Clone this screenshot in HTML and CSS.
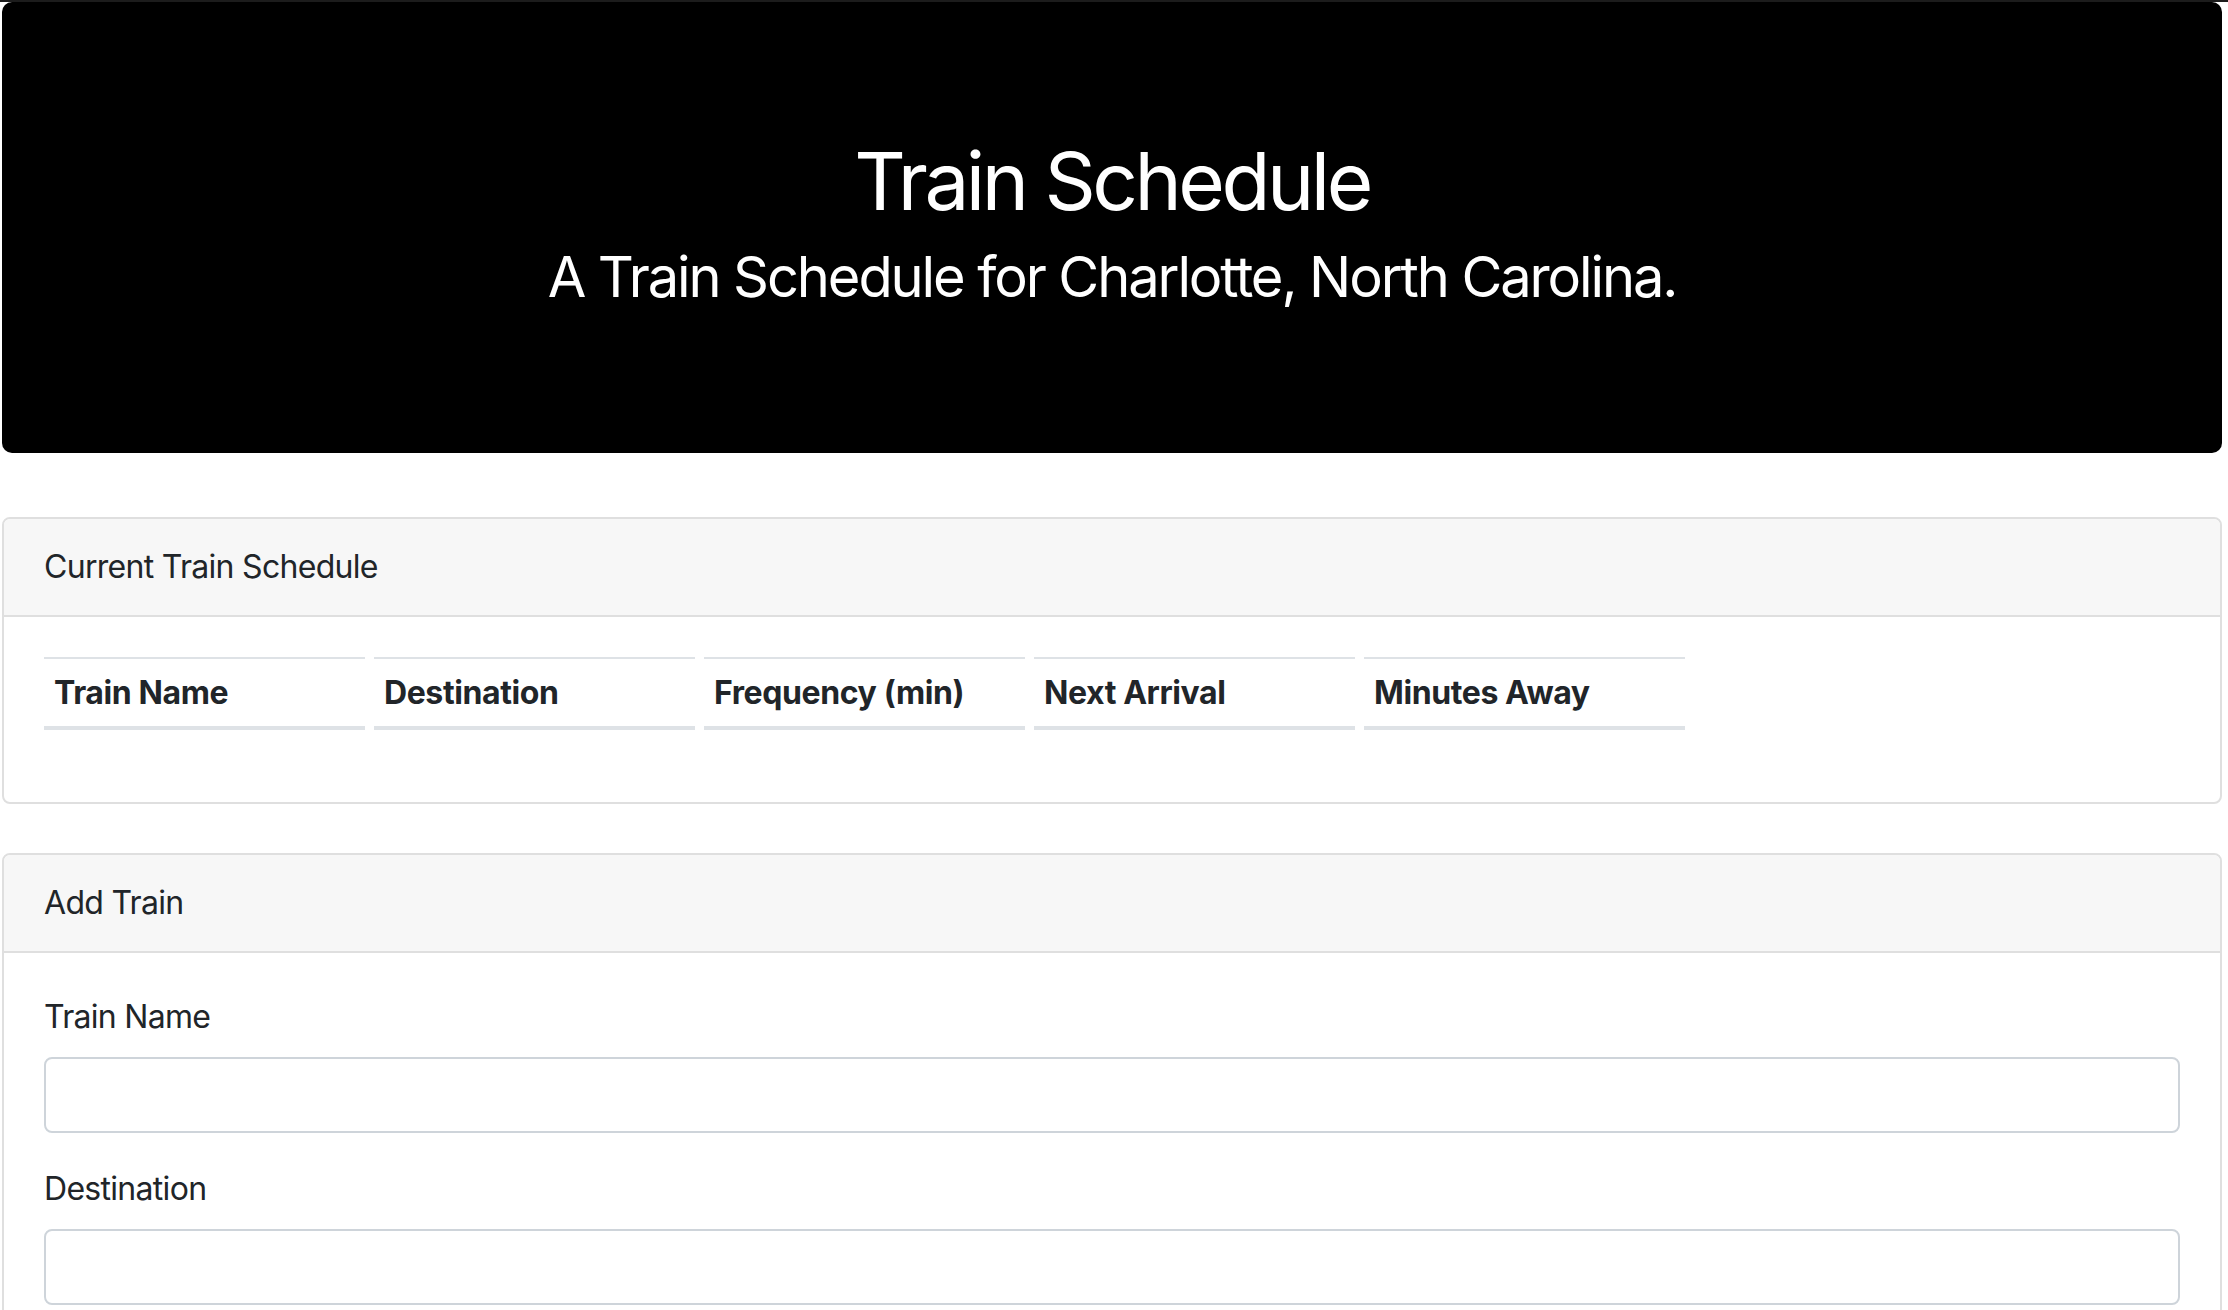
FILE: index.html
```html
<!DOCTYPE html>
<html lang="en">
<head>
<meta charset="utf-8">
<title>Train Schedule</title>
<link rel="stylesheet" href="styles.css">
</head>
<body>
  <header class="jumbotron">
    <h1 class="title">Train Schedule</h1>
    <h3 class="subtitle">A Train Schedule for Charlotte, North Carolina.</h3>
  </header>

  <section class="card">
    <div class="card-header">Current Train Schedule</div>
    <div class="card-body">
      <table class="schedule">
        <thead>
          <tr>
            <th>Train Name</th>
            <th>Destination</th>
            <th>Frequency (min)</th>
            <th>Next Arrival</th>
            <th>Minutes Away</th>
          </tr>
        </thead>
        <tbody></tbody>
      </table>
    </div>
  </section>

  <section class="card card-add">
    <div class="card-header">Add Train</div>
    <div class="card-body">
      <form class="form">
        <div class="form-group">
          <label class="label" for="train-name">Train Name</label>
          <input class="input" id="train-name" type="text">
        </div>
        <div class="form-group">
          <label class="label" for="destination">Destination</label>
          <input class="input" id="destination" type="text">
        </div>
      </form>
    </div>
  </section>
</body>
</html>
```
FILE: styles.css
```css
* { box-sizing: border-box; }

html, body { margin: 0; padding: 0; }

body {
  background: #ffffff;
  color: #212529;
  font-family: Inter, "Noto Sans", "Liberation Sans", sans-serif;
  font-size: 32px;
  line-height: 48px;
  letter-spacing: -0.7px;
  border-top: 2px solid #1c1c1c;
  padding: 0 6px 0 2px;
}

.jumbotron {
  background: #000000;
  color: #ffffff;
  border-radius: 10px;
  padding: 131px 64px 125px;
  margin-bottom: 64px;
  text-align: center;
}

.title {
  margin: 0 0 15px;
  font-size: 80px;
  line-height: 96px;
  font-weight: 400;
  letter-spacing: -3.5px;
}

.subtitle {
  margin: 0 0 17px;
  font-size: 56px;
  line-height: 67px;
  font-weight: 400;
  letter-spacing: -2.1px;
}

.card {
  border: 2px solid #dfdfdf;
  border-radius: 8px;
  overflow: hidden;
  background: #ffffff;
}

.card-add { margin-top: 49px; }

.card-header {
  background: #f7f7f7;
  border-bottom: 2px solid #dfdfdf;
  padding: 24px 40px;
}

.card-body {
  padding: 40px;
}

.schedule {
  border-collapse: separate;
  border-spacing: 9px 0;
  margin: 0 0 32px -9px;
}

.schedule th {
  width: 321px;
  text-align: left;
  font-weight: 700;
  letter-spacing: -0.4px;
  padding: 9.6px 10px;
  border-top: 2px solid #dee2e6;
  border-bottom: 4px solid #dee2e6;
  vertical-align: bottom;
}

.form { margin: 0; }

.form-group { margin-bottom: 32px; }

.label {
  display: block;
  margin-bottom: 16px;
}

.input {
  display: block;
  width: 100%;
  height: 76px;
  border: 2px solid #ced4da;
  border-radius: 8px;
  background: #ffffff;
  font: inherit;
  padding: 12px 24px;
}
```
